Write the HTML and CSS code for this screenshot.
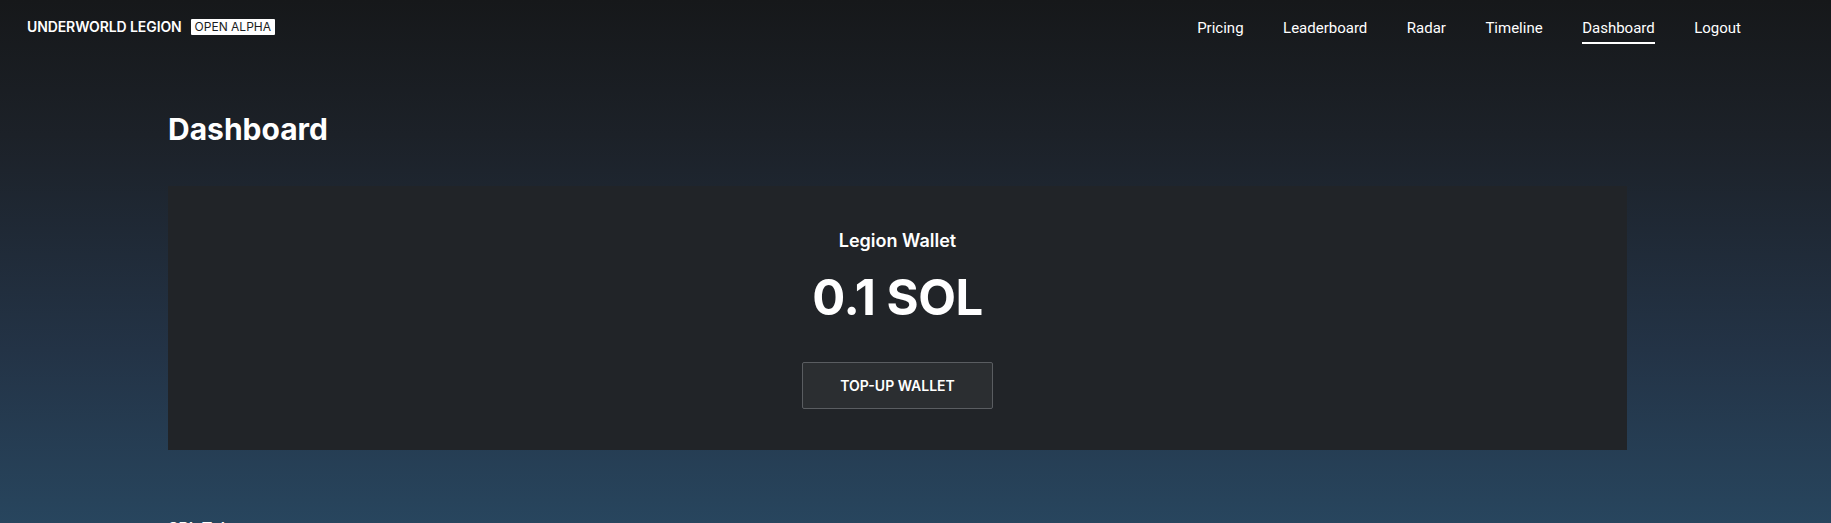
FILE: index.html
```html
<!DOCTYPE html>
<html lang="en">

<head>
    <meta charset="UTF-8">
    <meta name="viewport" content="width=device-width, initial-scale=1.0">
    <title>Dashboard - Underworld Legion</title>
    <link rel="stylesheet" href="styles.css">
</head>

<body>
    <!-- Top Bar -->
    <header class="topbar">
        <div class="brand">
            <span class="brand-name">UNDERWORLD LEGION</span>
            <span class="brand-badge">OPEN ALPHA</span>
        </div>
        <nav class="nav">
            <a class="nav-link" href="#">Pricing</a>
            <a class="nav-link" href="#">Leaderboard</a>
            <a class="nav-link" href="#">Radar</a>
            <a class="nav-link" href="#">Timeline</a>
            <a class="nav-link active" href="#">Dashboard</a>
            <a class="nav-link" href="#">Logout</a>
        </nav>
    </header>

    <!-- Page Content -->
    <main class="page">
        <h1 class="page-title">Dashboard</h1>

        <!-- Wallet Card -->
        <section class="wallet-card">
            <div class="wallet-label">Legion Wallet</div>
            <div class="wallet-balance">0.1 SOL</div>
            <button class="wallet-button">TOP-UP WALLET</button>
        </section>

        <h2 class="section-title">SPL Tokens</h2>
    </main>
</body>

</html>
```

FILE: styles.css
```css
html,
body {
    margin: 0;
    padding: 0;
}

body {
    min-height: 523px;
    background: linear-gradient(180deg, #16181a 0%, #1c2128 25%, #233346 65%, #284760 100%);
    color: #ffffff;
    font-family: Inter, "Noto Sans", sans-serif;
    overflow: hidden;
}

/* Top Bar */
.topbar {
    display: flex;
    justify-content: space-between;
    align-items: flex-start;
    padding: 0 90px 0 27px;
    height: 60px;
}

.brand {
    display: flex;
    align-items: center;
    gap: 9px;
    padding-top: 18px;
}

.brand-name {
    font-size: 14px;
    font-weight: 600;
    letter-spacing: -0.1px;
}

.brand-badge {
    background-color: #ffffff;
    color: #1a1d22;
    font-size: 12px;
    line-height: 16px;
    padding: 0 4px;
    border-radius: 1px;
}

.nav {
    display: flex;
    gap: 39.5px;
    padding-top: 18px;
}

.nav-link {
    color: #ffffff;
    text-decoration: none;
    font-family: Roboto, "Noto Sans", sans-serif;
    font-size: 15px;
    line-height: 20px;
    padding-bottom: 4px;
    border-bottom: 2px solid transparent;
}

.nav-link.active {
    border-bottom-color: #ffffff;
}

/* Page */
.page {
    width: 1459px;
    margin-left: 168px;
}

.page-title {
    margin: 49px 0 0;
    font-size: 30px;
    font-weight: 700;
    line-height: 40px;
}

/* Wallet Card */
.wallet-card {
    margin-top: 37px;
    height: 264px;
    box-sizing: border-box;
    background-color: #212428;
    display: flex;
    flex-direction: column;
    align-items: center;
    padding-top: 43px;
}

.wallet-label {
    font-size: 18px;
    font-weight: 600;
    line-height: 24px;
}

.wallet-balance {
    margin-top: 15px;
    font-size: 49px;
    font-weight: 700;
    line-height: 60px;
    letter-spacing: -0.5px;
}

.wallet-button {
    margin-top: 34px;
    width: 191px;
    height: 47px;
    background-color: #2b2e31;
    border: 1px solid #5a5d61;
    border-radius: 2px;
    color: #ffffff;
    font-family: Inter, "Noto Sans", sans-serif;
    font-size: 14px;
    font-weight: 600;
    cursor: pointer;
}

.section-title {
    margin: 68px 0 0;
    font-size: 16px;
    font-weight: 600;
}
```
